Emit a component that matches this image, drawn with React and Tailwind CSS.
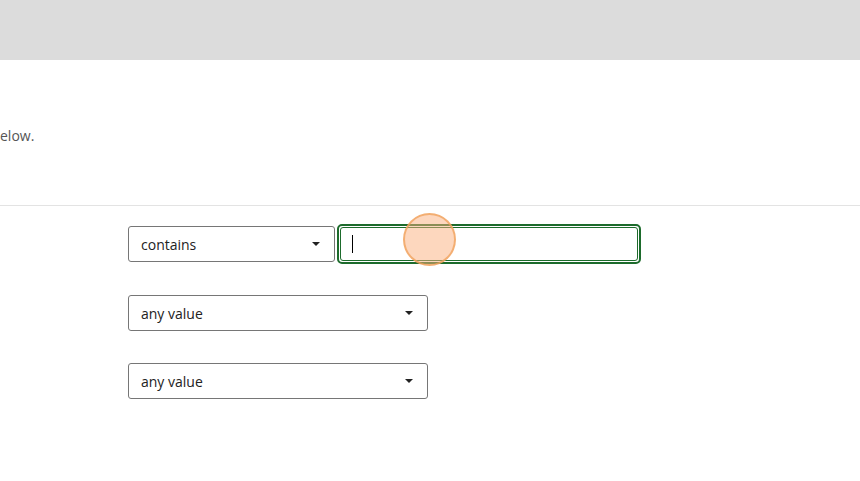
function Caret(){
    return(
        <svg width="8" height="4" viewBox="0 0 8 4" className="shrink-0">
            <path d="M0 0 L8 0 L4 4 Z" fill="#222" />
        </svg>
    )
}

function Select({ label, width, className = "" }){
    return(
        <div className={`flex h-[36px] ${width} ${className} items-center justify-between rounded-[3px] border border-[#767676] bg-white pl-[12px] pr-[14px] text-[14px] text-[#222]`}>
            <span>{label}</span>
            <Caret />
        </div>
    )
}

function App(){
    return(
        <div className="relative min-h-[481px] w-[860px] overflow-hidden bg-white font-['Open_Sans',sans-serif]">
            <div className="h-[60px] bg-[#dcdcdc]"></div>
            <div className="h-[146px] border-b border-[#e3e3e3] pt-[66px]">
                <p className="text-[14px] leading-[20px] text-[#555]">elow.</p>
            </div>
            <div className="flex flex-col pl-[128px] pt-[18px]">
                <div className="flex items-center gap-[2px]">
                    <Select label="contains" width="w-[207px]" />
                    <div className="h-[40px] w-[304px] rounded-[5px] border-2 border-[#1d6b2c] p-[1px]">
                        <div className="flex h-full items-center rounded-[3px] border border-[#1d6b2c] pl-[11px]">
                            <div className="h-[18px] w-[1px] bg-black"></div>
                        </div>
                    </div>
                </div>
                <Select label="any value" width="w-[300px]" className="mt-[31px]" />
                <Select label="any value" width="w-[300px]" className="mt-[32px]" />
            </div>
            <div className="absolute left-[403px] top-[213px] h-[53px] w-[53px] rounded-full border-2 border-[rgba(240,160,90,0.75)] bg-[rgba(252,175,125,0.5)]"></div>
        </div>
    )
}

export default App
